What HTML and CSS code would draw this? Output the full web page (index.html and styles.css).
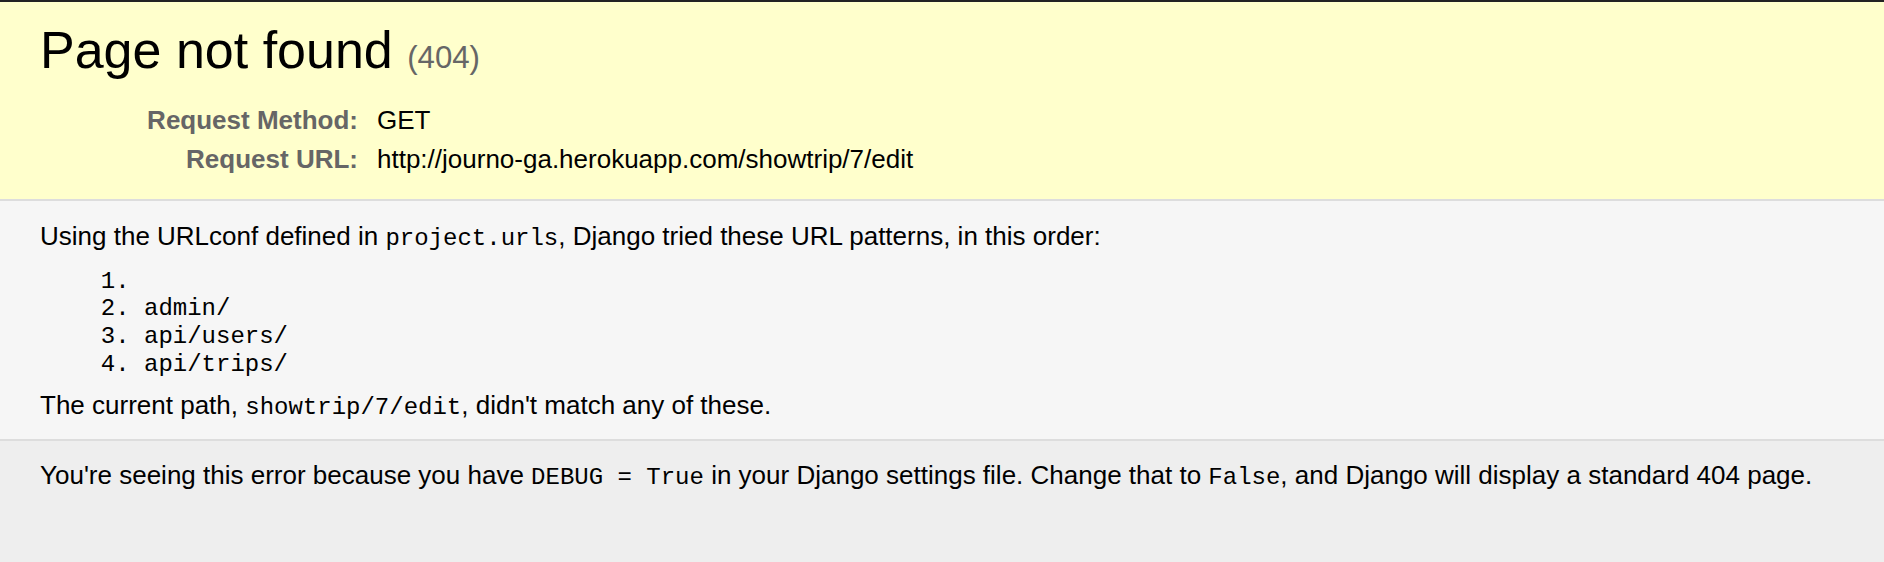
FILE: index.html
```html
<!DOCTYPE html>
<html lang="en">
<head>
  <meta charset="utf-8">
  <title>Page not found at /showtrip/7/edit</title>
  <link rel="stylesheet" href="styles.css">
</head>
<body class="page">
  <div class="summary">
    <h1 class="title">Page not found <span class="status">(404)</span></h1>
    <table class="meta">
      <tr>
        <th>Request Method:</th>
        <td>GET</td>
      </tr>
      <tr>
        <th>Request URL:</th>
        <td>http://journo-ga.herokuapp.com/showtrip/7/edit</td>
      </tr>
    </table>
  </div>
  <div class="info">
    <p class="para">Using the URLconf defined in <code class="code">project.urls</code>, Django tried these URL patterns, in this order:</p>
    <ol class="patterns">
      <li></li>
      <li>admin/</li>
      <li>api/users/</li>
      <li>api/trips/</li>
    </ol>
    <p class="para">The current path, <code class="code">showtrip/7/edit</code>, didn't match any of these.</p>
  </div>
  <div class="explanation">
    <p class="para">You're seeing this error because you have <code class="code">DEBUG = True</code> in your Django settings file. Change that to <code class="code">False</code>, and Django will display a standard 404 page.</p>
  </div>
</body>
</html>
```

FILE: styles.css
```css
html, body, div, h1, p, ol, li, table, th, td, code {
  margin: 0;
  padding: 0;
}

html {
  background: #eee;
}

.page {
  font-family: "Liberation Sans", Arial, Helvetica, sans-serif;
  font-size: 26px;
  color: #000;
  background: #eee;
  min-height: 562px;
}

.summary,
.info,
.explanation {
  padding: 20px 40px;
  border-bottom: 2px solid #ddd;
}

.summary {
  background: #ffc;
  box-shadow: inset 0 2px 0 #222;
}

.info {
  background: #f6f6f6;
  padding-bottom: 18px;
}

.explanation {
  background: #eee;
  border-bottom: none;
  padding-top: 19px;
}

.title {
  font-size: 52px;
  font-weight: normal;
  margin-bottom: 0.4em;
}

.status {
  font-size: 60%;
  color: #666;
  font-weight: normal;
}

.meta {
  border: none;
  border-collapse: collapse;
  width: 100%;
}

.meta th,
.meta td {
  vertical-align: top;
  padding: 4px 6px;
}

.meta th {
  width: 312px;
  text-align: right;
  color: #666;
  font-weight: bold;
  padding-right: 13px;
}

.meta td {
  text-align: left;
}

.code {
  font-family: "Liberation Mono", "Courier New", monospace;
  font-size: 24px;
}

.patterns {
  margin: 16px 104px 12px;
}

.patterns li {
  font-family: "Liberation Mono", "Courier New", monospace;
  font-size: 24px;
  line-height: 27.6px;
  min-height: 27.6px;
}
```
